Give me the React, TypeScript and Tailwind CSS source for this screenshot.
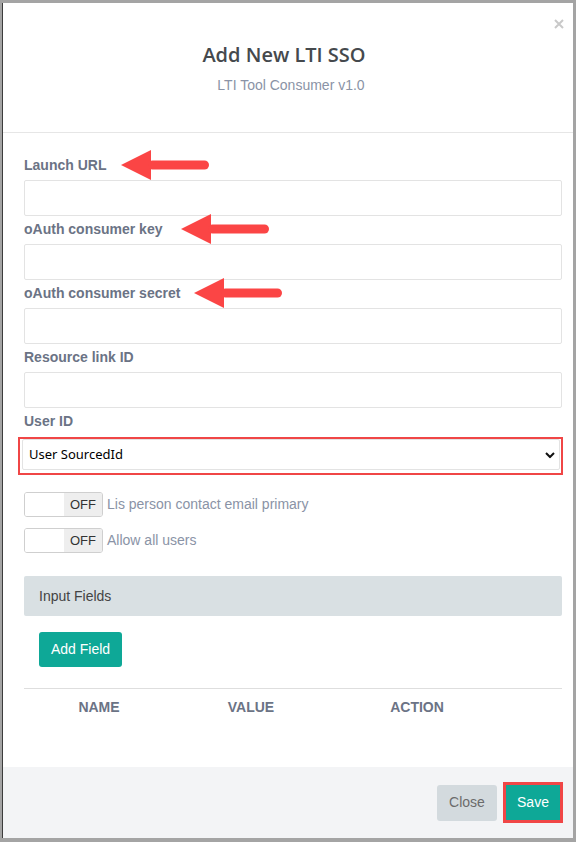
import { useState } from "react";

const Arrow = ({ left }: { left: string }) => (
  <svg
    className={`absolute top-1/2 -translate-y-1/2 ${left}`}
    width="88"
    height="30"
    viewBox="0 0 88 30"
  >
    <polygon points="0,15 30,0 30,30" fill="#fb4545" />
    <rect x="27" y="10.5" width="61" height="9" rx="4.5" fill="#fb4545" />
  </svg>
);

const Label = ({ text, arrow }: { text: string; arrow?: string }) => (
  <div className="relative h-[18px] text-[14px] leading-[18px] font-bold text-[#6b7385]">
    {text}
    {arrow && <Arrow left={arrow} />}
  </div>
);

const Toggle = ({ label }: { label: string }) => (
  <div className="flex items-center">
    <div className="flex h-[25px] w-[79px] overflow-hidden rounded-[3px] border border-[#cfcfcf]">
      <div className="w-[39px] bg-white" />
      <div className="flex flex-1 items-center justify-center bg-[#eeeeee] text-[13px] text-[#333]">
        OFF
      </div>
    </div>
    <span className="ml-[4px] text-[14px] text-[#8a93a6]">{label}</span>
  </div>
);

export default function App() {
  const [userId, setUserId] = useState("sourced");

  return (
    <div
      className="h-[842px] w-[576px] border-t-[3px] border-r-[3px] border-b-[4px] border-l-[2px] border-[#a4a4a4] bg-white"
      style={{ fontFamily: '"Liberation Sans", Arial, sans-serif' }}
    >
      <div className="flex h-full flex-col border-l border-[#3c3c3c]">
        {/* header */}
        <div className="relative h-[130px] shrink-0 border-b border-[#e6e6e6] pt-[38px] text-center">
          <button className="absolute right-[7px] top-[14px] p-[2px]">
            <svg width="10" height="10" viewBox="0 0 10 10">
              <path d="M1 1L9 9M9 1L1 9" stroke="#c9c9c9" strokeWidth="2" />
            </svg>
          </button>
          <h1
            className="pr-[8px] text-[20px] leading-[28px] font-semibold text-[#45494d]"
            style={{ fontFamily: '"Open Sans", "Noto Sans", sans-serif' }}
          >
            Add New LTI SSO
          </h1>
          <p className="mt-[7px] pl-[6px] text-[14px] leading-[18px] text-[#8a93a6]">LTI Tool Consumer v1.0</p>
        </div>

        {/* body */}
        <div className="flex flex-1 flex-col pt-[23px] pl-[21px] pr-[11px]">
          <Label text="Launch URL" arrow="left-[97px]" />
          <input className="mt-[6px] h-[36px] w-full rounded-[2px] border border-[#e3e3e3] px-3 outline-none" />
          <div className="mt-[4px]">
            <Label text="oAuth consumer key" arrow="left-[157px]" />
          </div>
          <input className="mt-[6px] h-[36px] w-full rounded-[2px] border border-[#e3e3e3] px-3 outline-none" />
          <div className="mt-[4px]">
            <Label text="oAuth consumer secret" arrow="left-[170px]" />
          </div>
          <input className="mt-[6px] h-[36px] w-full rounded-[2px] border border-[#e3e3e3] px-3 outline-none" />
          <div className="mt-[4px]">
            <Label text="Resource link ID" />
          </div>
          <input className="mt-[6px] h-[36px] w-full rounded-[2px] border border-[#e3e3e3] px-3 outline-none" />
          <div className="mt-[4px]">
            <Label text="User ID" />
          </div>

          <div className="mt-[7px] -ml-[6px] -mr-[1px] h-[38px] border-2 border-[#f04646] pt-[0px] pr-[1px] pb-[3px] pl-[2px]">
            <div className="relative h-full">
              <select
                value={userId}
                onChange={(e) => setUserId(e.target.value)}
                className="h-full w-full appearance-none rounded-[2px] border border-[#e3e3e3] bg-white pl-[6px] text-[13px] text-black outline-none"
                style={{ fontFamily: '"Noto Sans", "Open Sans", sans-serif' }}
              >
                <option value="sourced">User SourcedId</option>
                <option value="id">User Id</option>
              </select>
              <svg
                className="pointer-events-none absolute right-[5px] top-1/2 -translate-y-1/2"
                width="10"
                height="7"
                viewBox="0 0 10 7"
              >
                <path d="M1 1.5L5 5.5L9 1.5" stroke="#111" strokeWidth="2" fill="none" />
              </svg>
            </div>
          </div>

          <div className="mt-[17px] flex flex-col gap-[11px]">
            <Toggle label="Lis person contact email primary" />
            <Toggle label="Allow all users" />
          </div>

          <div className="mt-[23px] flex h-[40px] items-center rounded-[2px] bg-[#d9e0e3] pl-[15px] text-[14px] text-[#444]">
            Input Fields
          </div>

          <div className="mt-[16px] pl-[15px]">
            <button className="h-[35px] w-[83px] rounded-[3px] bg-[#0ea897] text-[14px] text-white">
              Add Field
            </button>
          </div>

          <div className="mt-[21px] border-t border-[#dedede]">
            <div className="grid h-[36px] grid-cols-[150px_154px_178px_1fr] items-center text-center text-[14px] font-bold text-[#6b7385]">
              <span>NAME</span>
              <span>VALUE</span>
              <span>ACTION</span>
              <span />
            </div>
          </div>
        </div>

        {/* footer */}
        <div className="flex h-[71px] shrink-0 items-center justify-end gap-[6px] bg-[#f3f4f6] pr-[10px]">
          <button className="h-[36px] w-[60px] rounded-[3px] bg-[#d3dade] text-[14px] text-[#6b6b6b]">
            Close
          </button>
          <div className="border-[3px] border-[#f04646]">
            <button className="block h-[35px] w-[54px] bg-[#0ea897] text-[14px] text-white">Save</button>
          </div>
        </div>
      </div>
    </div>
  );
}
